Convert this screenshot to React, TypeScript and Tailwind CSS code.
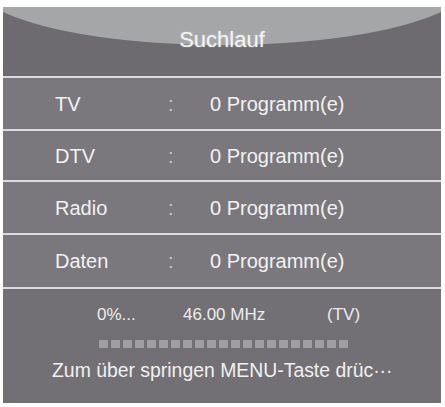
import React from "react";

const rows = [
  { label: "TV", h: "h-[51px]" },
  { label: "DTV", h: "h-[49px]" },
  { label: "Radio", h: "h-[51px]" },
  { label: "Daten", h: "h-[52px]" },
];

export default function App() {
  const squares = Array.from({ length: 21 });
  return (
    <div className="w-[445px] h-[407px] bg-white pt-[7px] pl-[3px]" style={{ fontFamily: '"Liberation Sans", Arial, sans-serif' }}>
      <div className="w-[438px] h-[396px] flex flex-col bg-[#dcdcde]">
        <div className="relative h-[69px] bg-[#6d6b6f] flex items-center justify-center pb-[3px] overflow-hidden">
          <svg className="absolute left-0 top-0" width="438" height="69" viewBox="0 0 438 69">
            <path d="M0 0 H438 V5 A250 64 0 0 1 0 5 Z" fill="#a5a6a8" />
          </svg>
          <span className="relative text-[22px] leading-[26px] text-[#f4f4f4] [text-shadow:0_0_2px_rgba(255,255,255,0.35)]">Suchlauf</span>
        </div>
        {rows.map((r) => (
          <div key={r.label} className="mt-[2px]">
            <div className={`${r.h} bg-[#7a787c] grid grid-cols-[113px_42px_1fr] items-center pl-[52px] text-[20px] leading-[24px] text-[#f2f2f2]`}>
              <span>{r.label}</span>
              <span className="text-[#c9c8ca]">:</span>
              <span>0 Programm(e)</span>
            </div>
          </div>
        ))}
        <div className="mt-[2px] flex-1 bg-[#727074] flex flex-col pt-[16px]">
          <div className="flex h-[20px] items-center pl-[94px] text-[17px] leading-[20px] text-[#ececec]">
            <span className="w-[86px]">0%...</span>
            <span className="w-[144px]">46.00 MHz</span>
            <span>(TV)</span>
          </div>
          <div className="mt-[15px] flex gap-[3px] pl-[96px] h-[8px]">
            {squares.map((_, i) => (
              <div key={i} className="w-[9px] h-[8px] bg-[#a09ea2]" />
            ))}
          </div>
          <div className="mt-[10px] h-[24px] pl-[49px] text-[19.4px] leading-[24px] text-[#f0f0f0] whitespace-nowrap">
            Zum über springen MENU-Taste drüc···
          </div>
        </div>
      </div>
    </div>
  );
}
